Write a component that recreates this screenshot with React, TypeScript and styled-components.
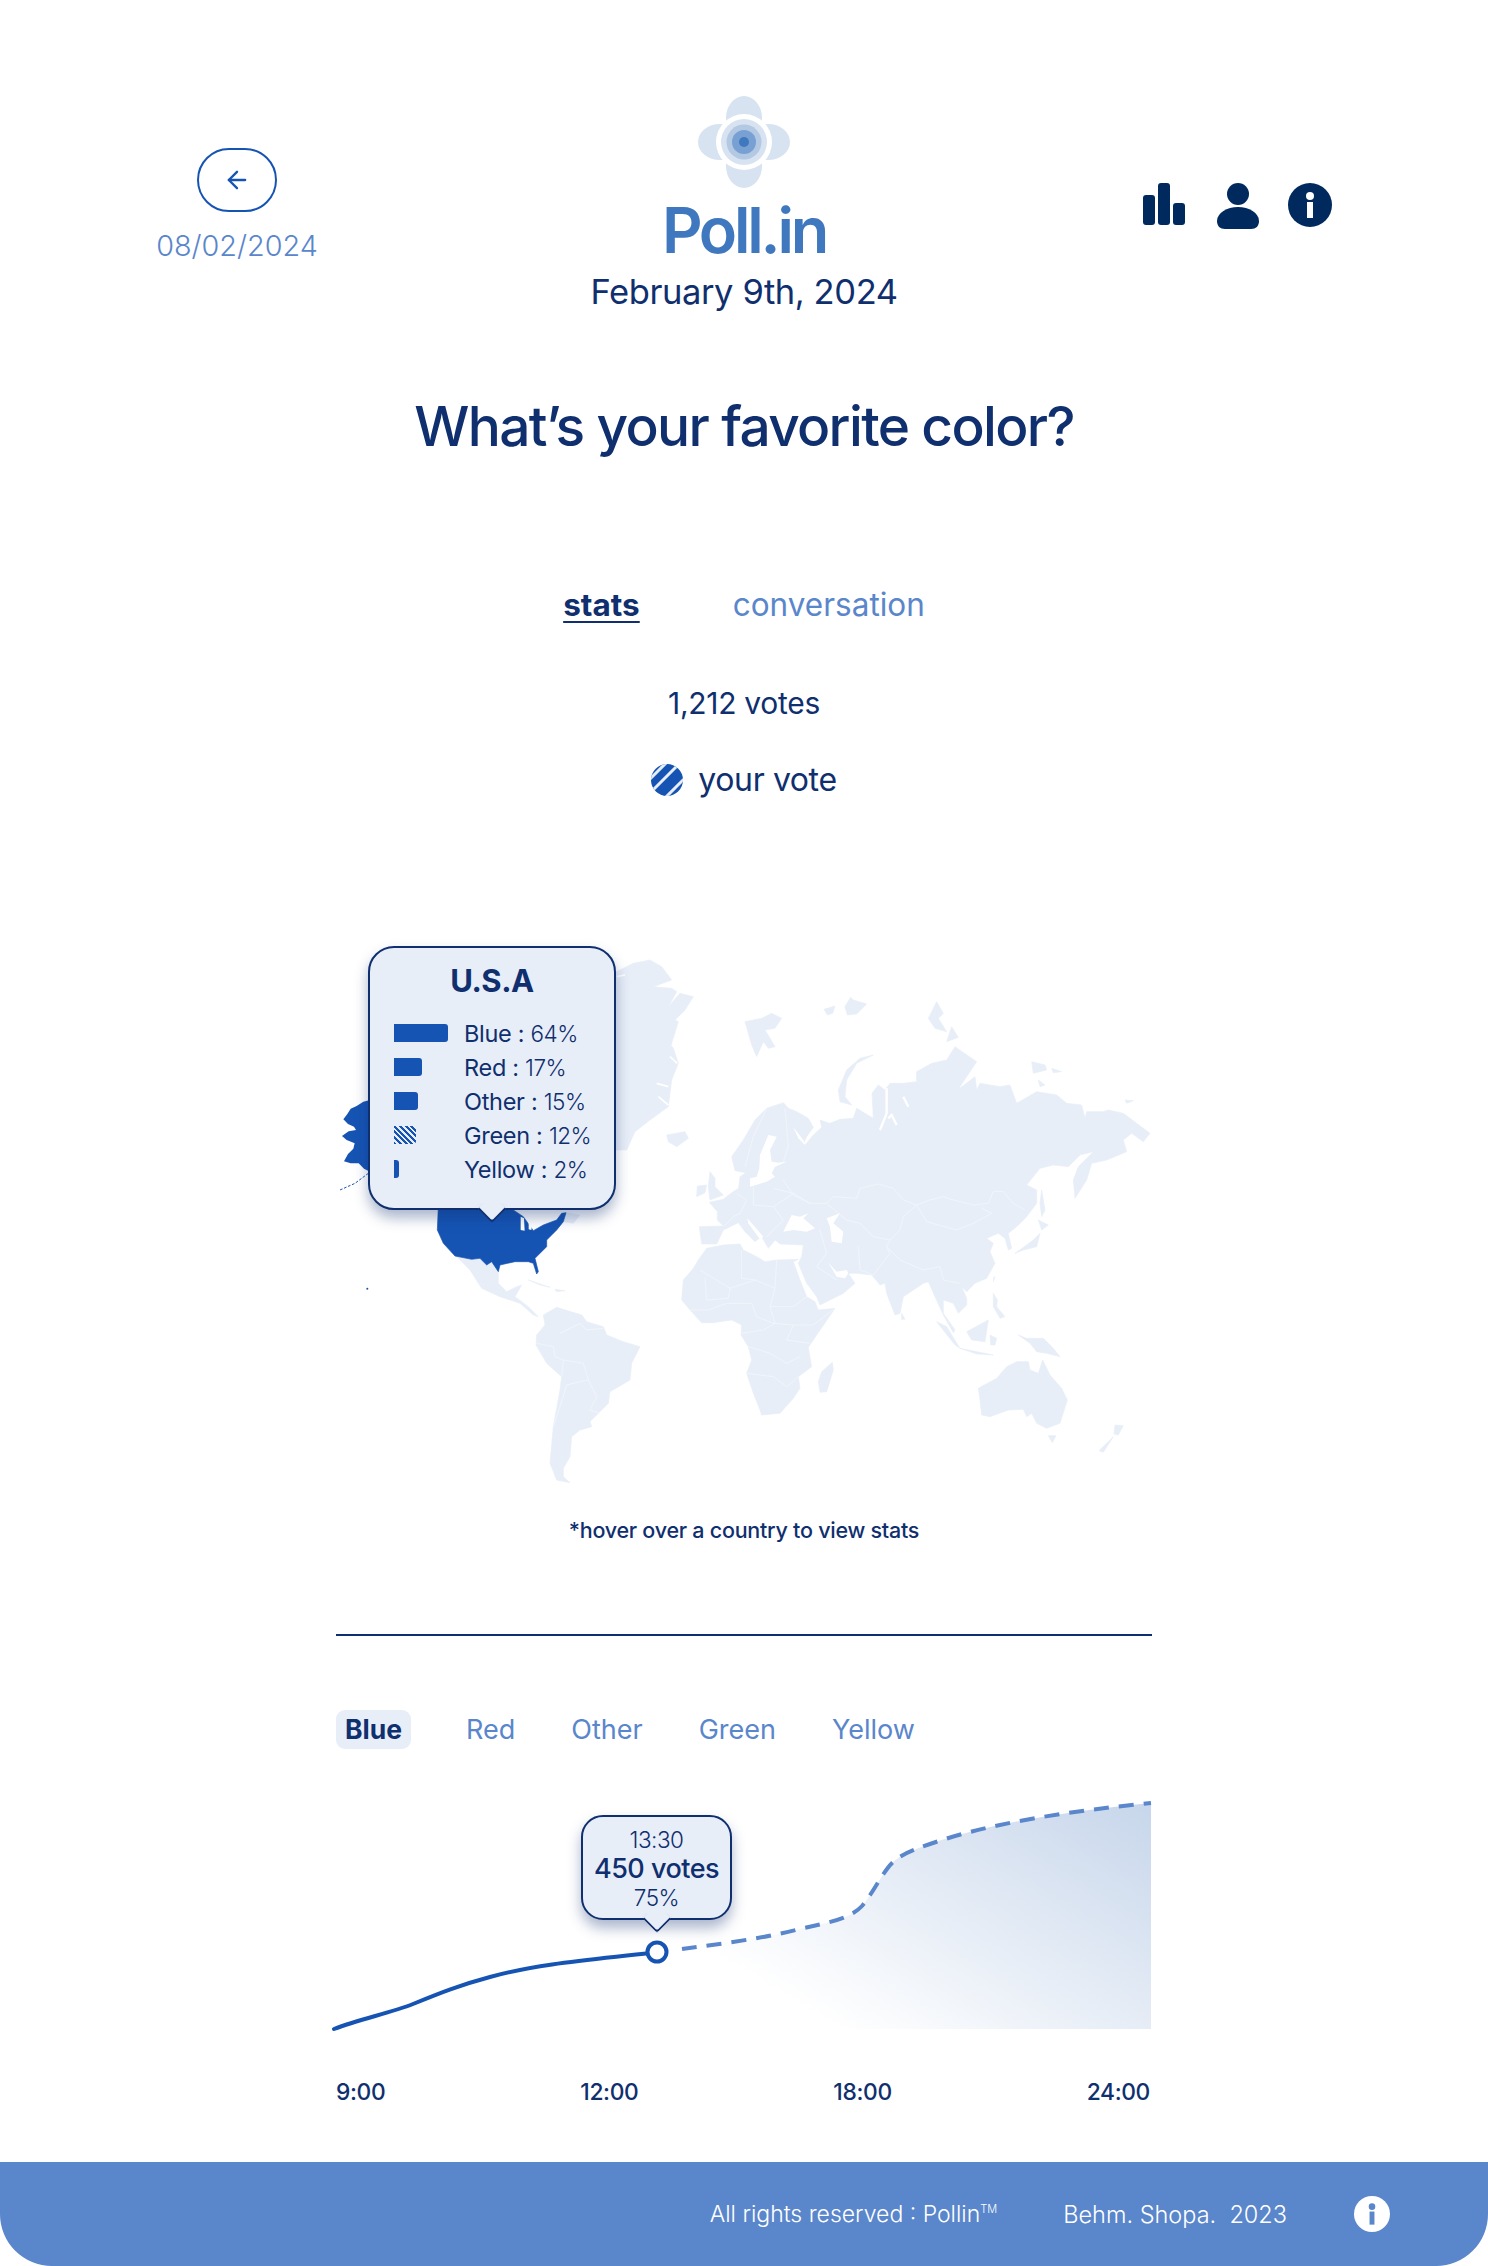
import React from "react";
import styled, { createGlobalStyle } from "styled-components";
import { ArrowLeft } from "lucide-react";

const NAVY = "#0f2f6e";
const BLUE = "#1654b3";
const SKY = "#5a86cb";
const PALE = "#e8eef8";

const GlobalStyle = createGlobalStyle`
  html, body { margin: 0; padding: 0; background: #fff; }
  body { font-family: Inter, "Noto Sans", sans-serif; color: ${NAVY}; }
  * { box-sizing: border-box; }
`;

const Page = styled.div`
  width: 1488px;
  height: 2266px;
  overflow: hidden;
  display: flex;
  flex-direction: column;
  align-items: center;
  & > * {
    flex: none;
  }
`;

const Header = styled.header`
  width: 100%;
  padding: 96px 156px 0;
  display: grid;
  grid-template-columns: 1fr auto 1fr;
`;

const BackColumn = styled.div`
  display: flex;
  flex-direction: column;
  align-items: center;
  width: 162px;
  padding-top: 52px;
`;

const BackButton = styled.button`
  width: 80px;
  height: 64px;
  border: 2px solid ${BLUE};
  border-radius: 32px;
  background: #fff;
  color: ${BLUE};
  display: flex;
  align-items: center;
  justify-content: center;
  padding: 0;
`;

const PrevDate = styled.div`
  margin-top: 17px;
  font-size: 28.8px;
  line-height: 34px;
  font-weight: 300;
  color: ${SKY};
  white-space: nowrap;
`;

const BrandColumn = styled.div`
  display: flex;
  flex-direction: column;
  align-items: center;
`;

const Brand = styled.div`
  margin-top: 10px;
  font-size: 63px;
  line-height: 64px;
  font-weight: 600;
  letter-spacing: -3.2px;
  color: #3f78bf;
`;

const Today = styled.div`
  margin-top: 10px;
  font-size: 34.5px;
  line-height: 40px;
  font-weight: 400;
  letter-spacing: -0.4px;
`;

const IconRow = styled.div`
  justify-self: end;
  padding-top: 87px;
  display: flex;
  align-items: flex-start;
  gap: 32px;
`;

const InfoSlot = styled.span`
  display: block;
  margin-left: -3px;
`;

const Question = styled.h1`
  margin: 80px 0 0;
  font-size: 55px;
  line-height: 68px;
  font-weight: 500;
  letter-spacing: -1.65px;
`;

const Tabs = styled.nav`
  margin-top: 125px;
  display: flex;
  gap: 93px;
`;

const Tab = styled.a<{ $active?: boolean }>`
  font-size: 31.5px;
  line-height: 40px;
  font-weight: ${(p) => (p.$active ? 700 : 400)};
  color: ${(p) => (p.$active ? NAVY : SKY)};
  text-decoration: ${(p) => (p.$active ? "underline" : "none")};
  text-underline-offset: 5px;
  text-decoration-thickness: 2px;
`;

const Votes = styled.div`
  margin-top: 58px;
  font-size: 30px;
  line-height: 40px;
  font-weight: 400;
  letter-spacing: -0.3px;
`;

const YourVote = styled.div`
  margin-top: 37px;
  display: flex;
  align-items: center;
  gap: 15px;
  font-size: 32px;
  line-height: 40px;
  letter-spacing: -0.4px;
`;

const MapFrame = styled.div`
  position: relative;
  align-self: flex-start;
  margin: 130px 0 0 320px;
  width: 860px;
  height: 570px;
`;

const MapSvg = styled.svg`
  display: block;
  width: 860px;
  height: 570px;
`;

const Bubble = styled.div`
  position: absolute;
  background: ${PALE};
  border: 2px solid ${NAVY};
  box-shadow: 0 8px 14px rgba(15, 47, 110, 0.35);
`;

const BubbleTail = styled.span`
  position: absolute;
  left: 50%;
  bottom: -11px;
  width: 20px;
  height: 20px;
  margin-left: -10px;
  background: ${PALE};
  border-right: 2px solid ${NAVY};
  border-bottom: 2px solid ${NAVY};
  border-bottom-right-radius: 4px;
  box-shadow: 4px 4px 7px rgba(15, 47, 110, 0.25);
  transform: rotate(45deg);
  clip-path: polygon(100% 0, 100% 100%, 0 100%, -40% 100%, 100% -40%);
`;

const CountryCard = styled(Bubble)`
  left: 48px;
  top: 16px;
  width: 248px;
  height: 264px;
  border-radius: 26px;
  padding: 14px 24px 0;
`;

const CountryName = styled.div`
  text-align: center;
  font-size: 31px;
  line-height: 38px;
  font-weight: 700;
  letter-spacing: -0.5px;
  margin-bottom: 16px;
`;

const StatRow = styled.div`
  display: grid;
  grid-template-columns: 70px 1fr;
  align-items: center;
  height: 34px;
  font-size: 23.5px;
  white-space: nowrap;
`;

const StatBar = styled.div<{ $hatched?: boolean }>`
  height: 18px;
  border-radius: 0 3px 3px 0;
  background: ${(p) =>
    p.$hatched
      ? `repeating-linear-gradient(45deg, ${BLUE} 0 2px, ${PALE} 2px 4px)`
      : BLUE};
`;

const StatLabel = styled.span`
  font-weight: 400;
  letter-spacing: -0.3px;
`;

const StatValue = styled.span`
  font-weight: 300;
  font-size: 22.5px;
  letter-spacing: -0.5px;
`;

const Hint = styled.div`
  margin-top: 15px;
  font-size: 21.5px;
  line-height: 30px;
  font-weight: 500;
  letter-spacing: -0.25px;
`;

const Rule = styled.hr`
  margin: 89px 0 0;
  width: 816px;
  height: 2px;
  border: 0;
  background: ${NAVY};
`;

const Chips = styled.div`
  margin-top: 74px;
  width: 816px;
  display: flex;
  gap: 36px;
`;

const Chip = styled.div<{ $active?: boolean }>`
  height: 39px;
  line-height: 39px;
  padding: 0 ${(p) => (p.$active ? "9px" : "10px")};
  margin-right: ${(p) => (p.$active ? "9px" : "0")};
  border-radius: 9px;
  font-size: ${(p) => (p.$active ? "26.5px" : "27px")};
  font-weight: ${(p) => (p.$active ? 700 : 400)};
  color: ${(p) => (p.$active ? NAVY : SKY)};
  background: ${(p) => (p.$active ? PALE : "transparent")};
`;

const ChartFrame = styled.div`
  position: relative;
  margin-top: 42px;
  width: 828px;
  height: 250px;
`;

const ChartSvg = styled.svg`
  display: block;
  width: 828px;
  height: 250px;
`;

const PointCard = styled(Bubble)`
  left: 251px;
  top: 24px;
  width: 151px;
  height: 105px;
  border-radius: 22px;
  text-align: center;
  padding-top: 9px;
`;

const PointLine = styled.div<{ $strong?: boolean }>`
  font-size: ${(p) => (p.$strong ? "27px" : "22.5px")};
  line-height: ${(p) => (p.$strong ? "30px" : "28px")};
  font-weight: ${(p) => (p.$strong ? 500 : 300)};
  letter-spacing: -0.5px;
`;

const Axis = styled.div`
  margin-top: 36px;
  width: 816px;
  padding-right: 2px;
  display: flex;
  justify-content: space-between;
  font-size: 22.8px;
  line-height: 30px;
  font-weight: 500;
  letter-spacing: -0.35px;
`;

const Footer = styled.footer`
  margin-top: 55px;
  width: 100%;
  height: 104px;
  background: ${SKY};
  border-radius: 0 0 52px 52px;
  color: #fff;
  display: flex;
  align-items: center;
  justify-content: flex-end;
  padding-right: 98px;
  font-size: 23px;
  font-weight: 300;
  white-space: pre;
`;

const FooterNote = styled.span`
  margin-right: 66px;
`;

const Tm = styled.sup`
  font-size: 11px;
  line-height: 0;
`;

const FooterMaker = styled.span`
  margin-right: 67px;
  font-size: 23.5px;
`;

// coordinates are taken from 3x crops of the picture, so each group has its own transform
const EURASIA =
  "M125 612 118 560 190 558 172 540 172 515 148 487 190 478 215 458 236 445 240 410 258 398 225 392 215 350 250 300 285 240 320 205 370 188 385 205 410 215 445 235 460 262 440 290 430 312 415 295 400 262 415 295 435 315 460 285 485 262 480 240 495 245 510 250 540 238 580 235 590 205 640 235 636 160 655 135 675 150 690 130 730 130 770 125 770 95 815 70 860 60 885 20 950 65 895 148 945 110 950 150 960 130 1020 140 1050 135 1070 190 1130 155 1190 165 1220 190 1265 195 1275 235 1280 215 1330 215 1345 210 1390 220 1430 250 1470 280 1450 305 1415 280 1390 300 1400 335 1340 360 1295 370 1280 420 1245 475 1240 420 1255 380 1300 335 1260 345 1225 380 1180 375 1140 385 1100 435 1130 450 1130 490 1100 530 1070 560 1045 580 1055 625 1045 630 1035 595 1015 580 980 595 1000 610 990 635 1005 670 980 715 945 730 920 755 905 740 920 775 920 795 895 820 880 790 850 780 850 820 885 870 880 878 850 825 825 770 805 725 790 730 730 770 720 820 705 825 680 760 675 730 660 735 635 705 590 700 565 700 585 730 550 760 480 795 470 770 440 730 415 670 425 650 430 615 360 612 345 600 325 625 305 590 285 605 255 575 235 548 190 570 170 612Z";
const AFRICA =
  "M140 625 115 660 100 685 70 720 65 780 90 810 125 848 160 848 215 840 245 855 243 885 265 920 275 960 260 1000 280 1060 300 1110 305 1125 360 1120 400 1075 420 1045 415 1010 455 980 445 922 470 885 525 805 475 810 465 785 440 770 420 720 400 665 415 658 350 660 315 665 290 650 250 630 240 612 190 615Z";
const ISLANDS9 = [
  "M110 470 112 438 140 435 135 458Z",
  "M150 395 165 415 165 440 190 465 150 480 145 440Z",
  "M20 285 75 275 85 295 50 320 25 305Z",
  "M640 45 590 70 560 120 555 170 575 195 540 185 535 150 560 90 600 55Z",
  "M725 820 735 838 725 838Z",
  "M830 845 860 860 900 925 885 915Z",
  "M920 875 985 840 975 905 935 900Z",
  "M900 925 1000 945 950 942Z",
  "M990 885 1010 895 1005 915 992 915Z",
  "M1145 450 1155 510 1145 530 1140 490Z",
  "M1135 540 1165 555 1145 570Z",
  "M1140 580 1130 620 1090 630 1065 640 1100 615 1120 600Z",
  "M1005 710 1000 725 1002 710Z",
  "M1000 760 1012 780 1010 800 1035 830 1020 835 1000 800Z",
];
const SEAS9 = [
  "M355 368 380 365 345 380 335 400 345 410 320 425 270 440 270 415 290 410 298 385 300 345 325 285 350 290 330 330 335 365Z",
  "M370 575 395 525 420 530 445 520 430 535 465 565 440 575 400 570Z",
  "M500 535 540 520 520 550 550 575 545 610 515 605 510 560Z",
  "M505 668 530 695 560 690 565 700 555 715 530 710Z",
  "M262 535 310 590 300 598 265 550Z",
  "M400 262 430 300 435 315 415 295Z",
];
const BORDERS9 = [
  "M370 420 400 465 450 490 500 490 520 470 590 475 600 445 655 432 700 445 730 480 770 495 810 480 850 470 880 480 940 495 985 490 1000 455 1030 455 1060 490 1095 510",
  "M770 495 800 545 890 570 940 550 995 520 965 505",
  "M770 495 730 530 720 570 690 600 680 620 720 660 790 690 840 680 850 720 900 730",
  "M500 490 560 540 600 550 640 590 690 600",
  "M595 620 600 690 640 705 690 640 680 620",
  "M480 570 500 640 470 680 530 720",
  "M320 205 280 290 255 380",
  "M375 205 385 320 370 365",
  "M230 460 260 480 240 520 220 530 190 560",
  "M280 440 280 495 340 500 400 460",
  "M340 445 400 460 450 490",
  "M340 500 370 540 320 590",
  "M120 690 210 745 285 720 345 745 350 660",
  "M245 630 245 715 285 720",
  "M210 745 205 775 140 780 135 715",
  "M345 745 330 800 400 800 440 770",
  "M90 810 145 810 200 790 275 790 290 830 340 850 400 855 460 855 525 805",
  "M330 800 345 850 310 870 245 880",
  "M400 855 380 900 450 910",
  "M265 920 330 940 380 970 420 950",
  "M262 1000 340 1010 380 1040 415 1010",
];
const GREENLAND =
  "M40 70 100 40 150 30 185 50 215 90 160 110 215 115 230 125 205 170 240 130 280 140 255 180 225 210 235 215 215 280 235 340 215 390 205 470 150 510 105 545 80 600 40 600Z";
const FJORDS =
  "M50 80 75 75M170 400 205 410M175 440 205 465M210 320 232 340M215 285 232 300";
const ARCTIC = [
  "M435 215 485 205 515 190 545 205 525 235 495 240 525 290 505 295 490 275 470 320 455 285Z",
  "M672 178 705 168 698 190 682 195Z",
  "M735 170 752 142 760 150 800 162 770 192 742 195Z",
  "M985 205 1010 155 1030 190 1015 205 1040 245 1005 235Z",
  "M1040 275 1055 230 1075 262Z",
];
const ARCTIC10 = [
  "M515 215 555 225 560 240 520 250Z",
  "M575 235 605 245 580 248Z",
  "M535 270 555 285 540 290Z",
  "M795 330 820 332 800 340Z",
];
const LOWER11 = [
  "M655 385 710 355 740 320 770 305 805 305 810 330 835 340 848 300 870 345 905 385 922 420 900 490 860 505 830 490 815 460 800 470 790 448 745 450 690 470 665 465 660 420Z",
  "M865 527 888 527 877 548Z",
  "M1065 495 1090 497 1075 525 1062 522Z",
  "M1060 530 1030 577 1017 572Z",
  "M217 307 220 330 200 395 180 397 175 365 185 335Z",
  "M775 225 800 235 850 235 880 265 900 290 860 280 830 275 810 250Z",
];
const USA =
  "M115 20 112 90 130 130 165 168 215 178 240 175 260 195 275 185 295 215 300 195 345 185 385 185 400 190 410 222 415 215 405 175 440 140 440 120 470 90 490 65 498 38 485 40 470 60 430 75 400 92 370 50 340 30Z";
const AMERICAS = [
  "M165 168 215 178 240 175 260 195 275 185 295 215 295 250 320 275 350 260 365 255 345 290 385 320 415 350 400 345 360 310 300 290 245 265 210 210 175 175Z",
  "M385 240 450 262 420 255Z",
  "M465 268 495 272 470 275Z",
  "M430 345 470 322 545 345 560 365 610 380 620 405 670 425 720 440 695 490 690 540 630 575 625 610 570 665 575 680 540 690 515 710 510 770 490 805 490 830 510 848 470 840 450 790 460 680 480 570 485 530 440 490 408 435 410 405 435 375Z",
  "M498 38 540 45 520 70 490 65Z",
];
const SA_BORDERS = [
  "M485 530 490 480 465 470 460 440 410 430",
  "M490 480 550 490 565 540 540 545 500 555 480 620 460 680",
  "M480 400 540 370 560 390 610 385",
  "M565 540 590 590 570 630 600 640",
];
const ALASKA =
  "M90 510 70 515 50 528 32 536 22 552 10 568 24 582 42 590 48 600 26 604 6 618 20 630 44 640 40 656 24 672 12 694 32 700 56 700 72 716 90 725Z";

function WorldMap() {
  return (
    <MapSvg viewBox="320 930 860 570" aria-hidden="true">
      <g fill={PALE} stroke={PALE} strokeLinejoin="round">
        <g transform="translate(660 1040) scale(.33333)" strokeWidth={2}>
          <path d={EURASIA} />
          <path d={AFRICA} />
          {ISLANDS9.map((d) => (
            <path key={d} d={d} />
          ))}
        </g>
        <g transform="translate(600 950) scale(.33333)" strokeWidth={2}>
          <path d={GREENLAND} />
          {ARCTIC.map((d) => (
            <path key={d} d={d} />
          ))}
          <path d={FJORDS} fill="none" stroke="#fff" strokeWidth={5} />
        </g>
        <g transform="translate(860 990) scale(.33333)" strokeWidth={2}>
          {ARCTIC10.map((d) => (
            <path key={d} d={d} />
          ))}
        </g>
        <g transform="translate(760 1260) scale(.33333)" strokeWidth={2}>
          {LOWER11.map((d) => (
            <path key={d} d={d} />
          ))}
        </g>
        <g transform="translate(400 1200) scale(.33333)" strokeWidth={2}>
          {AMERICAS.map((d) => (
            <path key={d} d={d} />
          ))}
        </g>
      </g>
      <g transform="translate(660 1040) scale(.33333)">
        <g fill="#fff">
          {SEAS9.map((d) => (
            <path key={d} d={d} />
          ))}
        </g>
        <path
          d="M680 145 680 220 660 270M710 255 695 225 685 235M730 170 745 200"
          fill="none"
          stroke="#fff"
          strokeWidth={7}
        />
        <g fill="none" stroke="#f5f8fc" strokeWidth={2}>
          {BORDERS9.map((d) => (
            <path key={d} d={d} />
          ))}
        </g>
      </g>
      <g
        transform="translate(400 1200) scale(.33333)"
        fill="none"
        stroke="#f5f8fc"
        strokeWidth={2}
      >
        {SA_BORDERS.map((d) => (
          <path key={d} d={d} />
        ))}
      </g>
      <g fill={BLUE} transform="translate(400 1200) scale(.33333)">
        <path d={USA} stroke={BLUE} strokeWidth={2} strokeLinejoin="round" />
        <path d="M362 50 372 55 374 92 362 90ZM386 55 398 62 394 90 386 88Z" fill="#fff" />
      </g>
      <g fill={BLUE} transform="translate(340 930) scale(.33333)">
        <path d={ALASKA} />
        <path
          d="M85 730 45 760 0 780"
          fill="none"
          stroke={BLUE}
          strokeWidth={3}
          strokeDasharray="8 5"
        />
        <circle cx={82} cy={1076} r={3} />
      </g>
    </MapSvg>
  );
}

function Logo() {
  return (
    <svg width="92" height="92" viewBox="698 96 92 92" aria-label="Poll.in logo">
      <g fill="#d7e3f1">
        <ellipse cx="744" cy="118" rx="18" ry="22" />
        <ellipse cx="744" cy="166" rx="18" ry="22" />
        <ellipse cx="720" cy="142" rx="22" ry="18" />
        <ellipse cx="768" cy="142" rx="22" ry="18" />
      </g>
      <circle cx="744" cy="142" r="28" fill="#fff" />
      <circle cx="744" cy="142" r="23" fill="#d7e3f1" />
      <circle cx="744" cy="142" r="17.5" fill="#b3c8e3" />
      <circle cx="744" cy="142" r="12" fill="#78a0d2" />
      <circle cx="744" cy="142" r="5" fill="#3f78bf" />
    </svg>
  );
}

function StatsIcon() {
  return (
    <svg width="42" height="44" viewBox="0 0 42 44" fill="#002a5e">
      <rect x="0" y="12" width="12" height="30" rx="3" />
      <rect x="15" y="0" width="12" height="42" rx="3" />
      <rect x="30" y="20" width="12" height="22" rx="3" />
    </svg>
  );
}

function PersonIcon() {
  return (
    <svg width="42" height="46" viewBox="0 0 42 46" fill="#002a5e">
      <circle cx="21" cy="11" r="11" />
      <path d="M0 38C0 30 10 24 21 24s21 6 21 14c0 5-3 8-8 8H8c-5 0-8-3-8-8Z" />
    </svg>
  );
}

function InfoIcon({ size, color, mark }: { size: number; color: string; mark: string }) {
  return (
    <svg width={size} height={size} viewBox="0 0 44 44" style={{ display: "block" }}>
      <circle cx="22" cy="22" r="22" fill={color} />
      <circle cx="22" cy="13" r="4" fill={mark} />
      <rect x="19" y="19" width="6" height="16" fill={mark} />
    </svg>
  );
}

function VoteMark() {
  return (
    <svg width="32" height="32" viewBox="0 0 32 32">
      <defs>
        <clipPath id="voteClip">
          <circle cx="16" cy="16" r="16" />
        </clipPath>
      </defs>
      <g clipPath="url(#voteClip)">
        <rect width="32" height="32" fill={BLUE} />
        <path
          d="M-4 18 18 -4M2 26 26 2M14 34 34 14"
          stroke={PALE}
          strokeWidth="3"
        />
      </g>
    </svg>
  );
}

function VotesChart() {
  const past = "M334 2028C360 2018 390 2012 413 2003C440 1992 460 1984 490 1976C540 1962 600 1958 650 1952";
  const future =
    "M682 1948C720 1943 760 1938 800 1928C830 1921 850 1918 862 1905C872 1893 878 1880 887 1868C896 1855 910 1850 930 1843C990 1822 1070 1810 1151 1802";
  return (
    <ChartSvg viewBox="330 1790 828 250" aria-hidden="true">
      <defs>
        <linearGradient
          id="votesFill"
          gradientUnits="userSpaceOnUse"
          x1="700"
          y1="1945"
          x2="881"
          y2="1641"
        >
          <stop offset="0" stopColor="#fff" />
          <stop offset="1" stopColor="#c7d6eb" />
        </linearGradient>
      </defs>
      <path d={`${future}L1151 2028L760 2028Z`} fill="url(#votesFill)" />
      <path d={past} fill="none" stroke={BLUE} strokeWidth="4" strokeLinecap="round" />
      <path d={future} fill="none" stroke={SKY} strokeWidth="4" strokeDasharray="15 10" />
      <circle cx="657" cy="1951" r="9.5" fill="#fff" stroke={BLUE} strokeWidth="4" />
    </ChartSvg>
  );
}

const STATS = [
  { name: "Blue", value: "64%", width: 54 },
  { name: "Red", value: "17%", width: 28 },
  { name: "Other", value: "15%", width: 24 },
  { name: "Green", value: "12%", width: 22, hatched: true },
  { name: "Yellow", value: "2%", width: 5 },
];

export default function App() {
  return (
    <Page>
      <GlobalStyle />
      <Header>
        <BackColumn>
          <BackButton aria-label="Previous poll">
            <ArrowLeft size={28} strokeWidth={2} />
          </BackButton>
          <PrevDate>08/02/2024</PrevDate>
        </BackColumn>
        <BrandColumn>
          <Logo />
          <Brand>Poll.in</Brand>
          <Today>February 9th, 2024</Today>
        </BrandColumn>
        <IconRow>
          <StatsIcon />
          <PersonIcon />
          <InfoSlot>
            <InfoIcon size={44} color="#002a5e" mark="#fff" />
          </InfoSlot>
        </IconRow>
      </Header>

      <Question>What’s your favorite color?</Question>

      <Tabs>
        <Tab $active>stats</Tab>
        <Tab>conversation</Tab>
      </Tabs>

      <Votes>1,212 votes</Votes>
      <YourVote>
        <VoteMark />
        your vote
      </YourVote>

      <MapFrame>
        <WorldMap />
        <CountryCard>
          <CountryName>U.S.A</CountryName>
          {STATS.map((s) => (
            <StatRow key={s.name}>
              <StatBar $hatched={s.hatched} style={{ width: s.width }} />
              <div>
                <StatLabel>{s.name} : </StatLabel>
                <StatValue>{s.value}</StatValue>
              </div>
            </StatRow>
          ))}
          <BubbleTail />
        </CountryCard>
      </MapFrame>

      <Hint>*hover over a country to view stats</Hint>
      <Rule />

      <Chips>
        <Chip $active>Blue</Chip>
        <Chip>Red</Chip>
        <Chip>Other</Chip>
        <Chip>Green</Chip>
        <Chip>Yellow</Chip>
      </Chips>

      <ChartFrame>
        <VotesChart />
        <PointCard>
          <PointLine>13:30</PointLine>
          <PointLine $strong>450 votes</PointLine>
          <PointLine>75%</PointLine>
          <BubbleTail />
        </PointCard>
      </ChartFrame>

      <Axis>
        <span>9:00</span>
        <span>12:00</span>
        <span>18:00</span>
        <span>24:00</span>
      </Axis>

      <Footer>
        <FooterNote>
          All rights reserved : Pollin<Tm>TM</Tm>
        </FooterNote>
        <FooterMaker>Behm. Shopa.  2023</FooterMaker>
        <InfoIcon size={36} color="#fff" mark={SKY} />
      </Footer>
    </Page>
  );
}
